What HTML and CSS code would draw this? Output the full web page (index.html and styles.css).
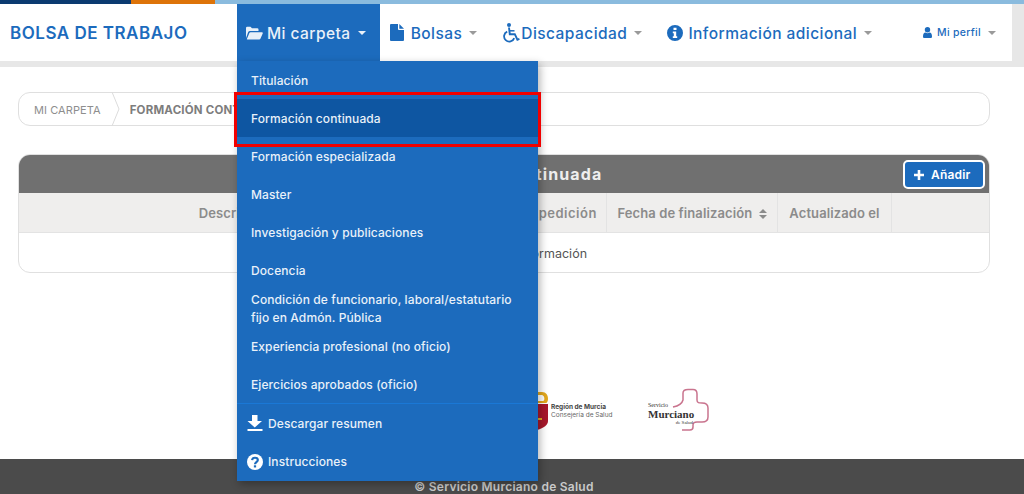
FILE: index.html
```html
<!DOCTYPE html>
<html lang="es">
<head>
    <meta charset="UTF-8">
    <meta name="viewport" content="width=device-width, initial-scale=1.0">
    <title>Bolsa de Trabajo</title>
    <link rel="stylesheet" href="styles.css">
</head>
<body>
    <div class="top-stripe">
        <span class="stripe-navy"></span>
        <span class="stripe-orange"></span>
        <span class="stripe-light"></span>
    </div>

    <header class="navbar">
        <div class="navbar-inner">
            <a class="brand" href="#">BOLSA DE TRABAJO</a>
            <nav class="nav-list">
                <div class="nav-item open">
                    <svg class="nav-icon" width="17" height="14" viewBox="0 0 17 14"><path fill="currentColor" d="M0 12V2a1.3 1.3 0 0 1 1.3-1.3h3.2L6 2.2h5.2A1.3 1.3 0 0 1 12.5 3.500V5H4a2 2 0 0 0-1.800 1.100zM.8 13.300 3.400 7a1.300 1.300 0 0 1 1.200-.8h11.200c.7 0 1.200.7.9 1.300l-2.300 5.300a1.200 1.200 0 0 1-1.100.7H1.200c-.3 0-.5-.1-.4-.2z"/></svg>
                    <span class="nav-label">Mi carpeta</span>
                    <span class="caret"></span>
                    <div class="dropdown">
                        <a class="dropdown-item" href="#">Titulación</a>
                        <a class="dropdown-item active" href="#">Formación continuada</a>
                        <a class="dropdown-item" href="#">Formación especializada</a>
                        <a class="dropdown-item" href="#">Master</a>
                        <a class="dropdown-item" href="#">Investigación y publicaciones</a>
                        <a class="dropdown-item" href="#">Docencia</a>
                        <a class="dropdown-item" href="#">Condición de funcionario, laboral/estatutario fijo en Admón. Pública</a>
                        <a class="dropdown-item" href="#">Experiencia profesional (no oficio)</a>
                        <a class="dropdown-item" href="#">Ejercicios aprobados (oficio)</a>
                        <div class="dropdown-divider"></div>
                        <a class="dropdown-item with-icon" href="#">
                            <svg width="16" height="17" viewBox="0 0 16 17"><path fill="#fff" d="M5 0h5.500v6H15L7.750 12.500.5 6H5zM.5 14h15v2H.5z"/></svg>
                            Descargar resumen
                        </a>
                        <a class="dropdown-item with-icon" href="#">
                            <svg width="16" height="16" viewBox="0 0 17 17"><circle cx="8.500" cy="8.500" r="8.500" fill="#fff"/><path fill="none" stroke="#1c6bbd" stroke-width="2.300" d="M5.400 6.600c.2-1.700 1.500-2.600 3.100-2.600 1.700 0 3 1 3 2.400 0 2.300-3 2-3 4.400"/><rect x="7.300" y="12" width="2.400" height="2.300" fill="#1c6bbd"/></svg>
                            Instrucciones
                        </a>
                    </div>
                </div>
                <div class="nav-item">
                    <svg class="nav-icon file-icon" width="14" height="17" viewBox="0 0 14 17"><path fill="currentColor" d="M0 1a1 1 0 0 1 1-1h7v5a1 1 0 0 0 1 1h5v10a1 1 0 0 1-1 1H1a1 1 0 0 1-1-1zM9.300 0 14 4.700H9.300z"/></svg>
                    <span class="nav-label">Bolsas</span>
                    <span class="caret"></span>
                </div>
                <div class="nav-item">
                    <svg class="nav-icon wheelchair" width="18" height="20" viewBox="0 0 18 20"><circle cx="7" cy="2" r="2" fill="currentColor"/><path fill="none" stroke="currentColor" stroke-width="1.900" d="M7 4.500 7.800 11.200h5l2.600 5.500 2-.8"/><path fill="none" stroke="currentColor" stroke-width="1.500" d="M7.500 7.800h5"/><path fill="none" stroke="currentColor" stroke-width="1.800" d="M5.200 8.600a5.200 5.200 0 1 0 7 6.500"/></svg>
                    <span class="nav-label">Discapacidad</span>
                    <span class="caret"></span>
                </div>
                <div class="nav-item">
                    <svg class="nav-icon" width="16" height="16" viewBox="0 0 16 16"><path fill="currentColor" fill-rule="evenodd" d="M8 0a8 8 0 1 1 0 16A8 8 0 0 1 8 0zM6.500 2.700v2.300h3V2.700zM5.800 6.500v1.700h1v3.100h-1V13h4.400v-1.700h-1V6.500z"/></svg>
                    <span class="nav-label">Información adicional</span>
                    <span class="caret"></span>
                </div>
            </nav>
            <div class="profile">
                <svg width="9" height="11" viewBox="0 0 9 11"><circle cx="4.500" cy="2.700" r="2.700" fill="currentColor"/><path fill="currentColor" d="M0 9.500C0 7 1 5.500 2.500 5.500c.6.400 1.200.7 2 .7s1.400-.3 2-.7C8 5.500 9 7 9 9.500 9 10.500 8.400 11 7.600 11H1.400C.6 11 0 10.500 0 9.500z"/></svg>
                <span class="profile-label">Mi perfil</span>
                <span class="caret"></span>
            </div>
        </div>
    </header>

    <main class="content">
        <div class="breadcrumb">
            <span class="crumb">MI CARPETA</span>
            <svg class="crumb-sep" width="10" height="34" viewBox="0 0 10 34"><path fill="none" stroke="#dcdcdc" d="M1 0l7 17-7 17"/></svg>
            <span class="crumb current">FORMACIÓN CONTINUADA</span>
        </div>

        <section class="card">
            <div class="card-head">
                <h2>Formación continuada</h2>
                <button class="btn-add" type="button">
                    <svg width="10" height="10" viewBox="0 0 10 10"><path fill="#fff" d="M3.700 0h2.600v3.700H10v2.600H6.300V10H3.700V6.300H0V3.700h3.700z"/></svg>
                    Añadir
                </button>
            </div>
            <table class="data-table">
                <thead>
                    <tr>
                        <th class="col-desc">Descripción</th>
                        <th class="col-exp">Fecha de expedición</th>
                        <th class="col-end">Fecha de finalización <span class="sort"></span></th>
                        <th class="col-upd">Actualizado el</th>
                        <th></th>
                    </tr>
                </thead>
                <tbody>
                    <tr>
                        <td colspan="5">No hay ninguna información</td>
                    </tr>
                </tbody>
            </table>
        </section>

        <div class="logos">
            <div class="logo-region">
                <svg width="12" height="38" viewBox="0 0 12 38"><path fill="#e3a81d" d="M0 0h5c4 0 6 3 6 7 0 2-1 4-2 4H0V9h6c2 0 2-5-1-6H0z"/><path fill="#a8182c" d="M0 12h11v17c0 4-4 7-11 9z"/><path fill="#e3a81d" d="M0 26h5v2H0z"/></svg>
                <div class="region-text">
                    <strong>Región de Murcia</strong>
                    <span>Consejería de Salud</span>
                </div>
            </div>
            <div class="logo-sms">
                <svg class="sms-cross" width="62" height="44" viewBox="0 0 62 44"><path fill="none" stroke="#c9748e" stroke-width="1.500" d="M25 19C30 18 34 16 35 12V5C35 2 37 1.500 40 1.500H45C48 1.500 49 3 49 6V12C49 15 51 15 54 15 58 15 60 17 60 20V29C60 32 58 34 54 34H49C46 34 45 35 45 37V39C45 41 44 42 42 42H34"/></svg>
                <div class="sms-text">
                    <small>Servicio</small>
                    <strong>Murciano</strong>
                    <small class="sms-sub">de Salud</small>
                </div>
            </div>
        </div>
    </main>

    <footer class="site-footer">
        <p>© Servicio Murciano de Salud</p>
    </footer>
</body>
</html>
```

FILE: styles.css
```css
/* General */
html, body {
    height: 494px;
    overflow: hidden;
}

body {
    margin: 0;
    font-family: Inter, 'Open Sans', Arial, sans-serif;
    background: #ffffff;
    color: #555555;
}

a {
    color: inherit;
    text-decoration: none;
}

/* Top stripe */
.top-stripe {
    display: flex;
    height: 4px;
}

.stripe-navy {
    width: 131px;
    background: #0b3a70;
}

.stripe-orange {
    width: 84px;
    background: #dd7309;
}

.stripe-light {
    flex: 1;
    background: #8abbde;
}

/* Navbar */
.navbar {
    background: #e7e7e7;
    padding: 0 12px 6px 0;
}

.navbar-inner {
    display: flex;
    align-items: center;
    height: 57px;
    background: #ffffff;
    color: #1c6bbd;
}

.brand {
    width: 237px;
    padding-left: 10px;
    box-sizing: border-box;
    font-size: 17px;
    font-weight: 600;
    letter-spacing: 0.5px;
    white-space: nowrap;
}

.nav-list {
    display: flex;
    align-self: stretch;
}

.nav-item {
    position: relative;
    display: flex;
    align-items: center;
    padding: 0 15px 0 10px;
    font-size: 15.5px;
    font-weight: 500;
    white-space: nowrap;
}

.nav-item.open {
    padding: 0 14px 0 9px;
    background: #1c6bbd;
    color: #e9f1f9;
}

.nav-icon {
    flex: none;
    margin-right: 5px;
}

.nav-item.open .nav-icon {
    margin-right: 4px;
}

.file-icon {
    margin-right: 7px;
}

.wheelchair {
    margin-right: 1px;
}

.nav-label {
    padding-top: 1px;
    letter-spacing: 0.45px;
}

.caret {
    display: inline-block;
    margin-left: 7px;
    border-top: 4px solid #9a9a9a;
    border-left: 4px solid transparent;
    border-right: 4px solid transparent;
}

.nav-item.open .caret {
    border-top-color: #e9f1f9;
}

.profile {
    display: flex;
    align-items: center;
    margin-left: auto;
    padding-right: 16px;
    font-size: 10.5px;
    font-weight: 500;
}

.profile-label {
    margin-left: 5px;
    letter-spacing: 0.3px;
}

/* Dropdown */
.dropdown {
    position: absolute;
    top: 57px;
    left: 0;
    z-index: 10;
    width: 301px;
    height: 420px;
    background: #1c6bbd;
    box-shadow: 2px 3px 8px rgba(0, 0, 0, 0.3);
    font-size: 12px;
    font-weight: 500;
    white-space: normal;
}

.dropdown-item {
    position: relative;
    display: flex;
    align-items: center;
    box-sizing: border-box;
    min-height: 38px;
    padding: 1px 14px 0;
    line-height: 18px;
    color: #e9f1f9;
    letter-spacing: 0.1px;
}

.dropdown-item.active {
    background: #0e56a2;
}

/* red mark around the selected option */
.dropdown-item.active::after {
    content: "";
    position: absolute;
    top: -7px;
    left: -3px;
    right: -3px;
    bottom: -10px;
    border: 3px solid #f00000;
}

.dropdown-divider {
    height: 1px;
    background: #1a78d6;
}

.with-icon {
    gap: 5px;
    padding-left: 10px;
}

.with-icon svg {
    flex: none;
}

/* Main content */
.content {
    padding: 25px 34px 0 18px;
}

.breadcrumb {
    display: flex;
    align-items: center;
    box-sizing: border-box;
    height: 34px;
    padding-left: 15px;
    border: 1.5px solid #dfdfdf;
    border-radius: 12px;
    font-size: 11px;
    white-space: nowrap;
}

.crumb {
    padding-top: 1px;
    color: #8e8e8e;
    letter-spacing: 0.08px;
}

.crumb.current {
    font-size: 11.500px;
    font-weight: 700;
    color: #7d7d7d;
    letter-spacing: 0.2px;
}

.crumb-sep {
    margin: 0 9px 0 10px;
}

/* Card with table */
.card {
    margin-top: 28px;
    height: 119px;
    box-sizing: border-box;
    border: 1.5px solid #e0e0e0;
    border-radius: 12px;
    overflow: hidden;
}

.card-head {
    position: relative;
    display: flex;
    align-items: center;
    justify-content: center;
    height: 38px;
    background: #707070;
}

.card-head h2 {
    margin: 0;
    font-size: 16px;
    font-weight: 700;
    letter-spacing: 1.1px;
    color: #eeeeee;
}

.btn-add {
    position: absolute;
    top: 5px;
    right: 4px;
    display: flex;
    align-items: center;
    gap: 7px;
    box-sizing: border-box;
    width: 82px;
    height: 29px;
    padding: 0 0 0 9px;
    border: 2px solid #ffffff;
    border-radius: 5px;
    background: #1c6bbd;
    color: #ffffff;
    font-family: inherit;
    font-size: 12px;
    font-weight: 600;
    letter-spacing: 0.2px;
}

.data-table {
    width: 100%;
    table-layout: fixed;
    border-collapse: collapse;
}

.data-table th {
    height: 39px;
    padding: 0;
    background: #efeeed;
    border-right: 1px solid #e3e3e3;
    border-bottom: 1px solid #e3e3e3;
    color: #8b8b8b;
    font-size: 13px;
    font-weight: 600;
    letter-spacing: 0.1px;
    white-space: nowrap;
}

.data-table th:last-child {
    border-right: none;
}

.data-table .col-desc {
    width: 416px;
    padding-left: 10px;
}

.data-table .col-exp {
    width: 157px;
    padding-left: 3px;
    letter-spacing: 0.5px;
}

.col-end {
    width: 170px;
}

.col-upd {
    width: 113px;
}

.sort {
    display: inline-block;
    position: relative;
    width: 8px;
    height: 10px;
    margin-left: 3px;
    vertical-align: -1px;
}

.sort::before,
.sort::after {
    content: "";
    position: absolute;
    left: 0;
    border-left: 4px solid transparent;
    border-right: 4px solid transparent;
}

.sort::before {
    top: 0;
    border-bottom: 4px solid #8b8b8b;
}

.sort::after {
    bottom: 0;
    border-top: 4px solid #8b8b8b;
}

.data-table td {
    height: 40px;
    padding: 0;
    text-align: center;
    font-size: 12.500px;
    color: #555555;
}

/* Logos */
.logos {
    display: flex;
    align-items: flex-start;
    margin-top: 115px;
    height: 71px;
    padding-left: 519px;
}

.logo-region {
    display: flex;
    align-items: center;
    width: 111px;
    margin-top: 4px;
}

.region-text {
    display: flex;
    flex-direction: column;
    margin-left: 2px;
    font-size: 6.500px;
    line-height: 8px;
    color: #666666;
    white-space: nowrap;
}

.region-text strong {
    color: #444444;
}

.logo-sms {
    position: relative;
    display: flex;
    align-items: center;
    width: 62px;
    height: 42px;
}

.sms-text {
    position: relative;
    display: flex;
    flex-direction: column;
    width: 45px;
    margin-top: 10px;
    font-family: 'Liberation Serif', serif;
    color: #333333;
    line-height: 7px;
}

.sms-text small {
    font-size: 6px;
}

.sms-text strong {
    font-size: 11px;
    line-height: 10px;
}

.sms-text .sms-sub {
    text-align: right;
    font-size: 5px;
}

.sms-cross {
    position: absolute;
    top: 0;
    left: 0;
}

/* Footer */
.site-footer {
    height: 35px;
    padding-right: 16px;
    background: #4b4b4b;
    text-align: center;
}

.site-footer p {
    margin: 0;
    padding-top: 21px;
    font-size: 12px;
    font-weight: 600;
    letter-spacing: 0.25px;
    line-height: 14px;
    color: #c9c9c9;
}
```
